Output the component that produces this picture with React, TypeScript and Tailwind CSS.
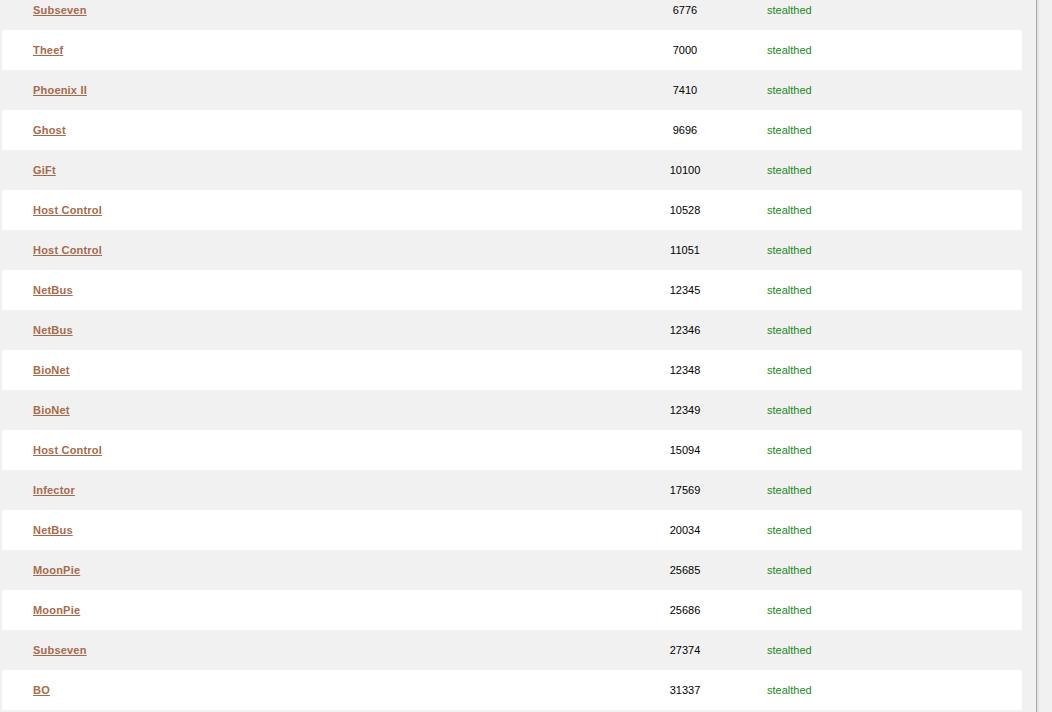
import React from 'react';

const rows: [string, number][] = [
  ['Subseven', 6776],
  ['Theef', 7000],
  ['Phoenix II', 7410],
  ['Ghost', 9696],
  ['GiFt', 10100],
  ['Host Control', 10528],
  ['Host Control', 11051],
  ['NetBus', 12345],
  ['NetBus', 12346],
  ['BioNet', 12348],
  ['BioNet', 12349],
  ['Host Control', 15094],
  ['Infector', 17569],
  ['NetBus', 20034],
  ['MoonPie', 25685],
  ['MoonPie', 25686],
  ['Subseven', 27374],
  ['BO', 31337],
];

export default function App() {
  return (
    <div className="flex h-[712px] w-full overflow-hidden bg-[#f1f1f1] font-['Liberation_Sans',Arial,sans-serif] text-[11px]">
      {/* port table */}
      <div className="w-[1036px] pl-[2px]">
        <div className="-mt-[10px] w-[1020px]">
          {rows.map(([name, port], i) => (
            <div
              key={i}
              className={`grid h-[40px] grid-cols-[618px_130px_1fr] items-center ${
                i % 2 === 0 ? 'bg-[#f1f1f1]' : 'bg-white'
              }`}
            >
              <a href="#" className="pl-[31px] font-bold tracking-[0.2px] text-[#a86a4c] underline">
                {name}
              </a>
              <span className="text-center text-black">{port}</span>
              <span className="pl-[17px] text-[#1b8a1b]">stealthed</span>
            </div>
          ))}
        </div>
      </div>
      <div className="w-px bg-[#a9a9a9]" />
      <div className="w-[2px] bg-[#e4e4e4]" />
      <div className="flex-1 bg-[#f0f0f0]" />
    </div>
  );
}
